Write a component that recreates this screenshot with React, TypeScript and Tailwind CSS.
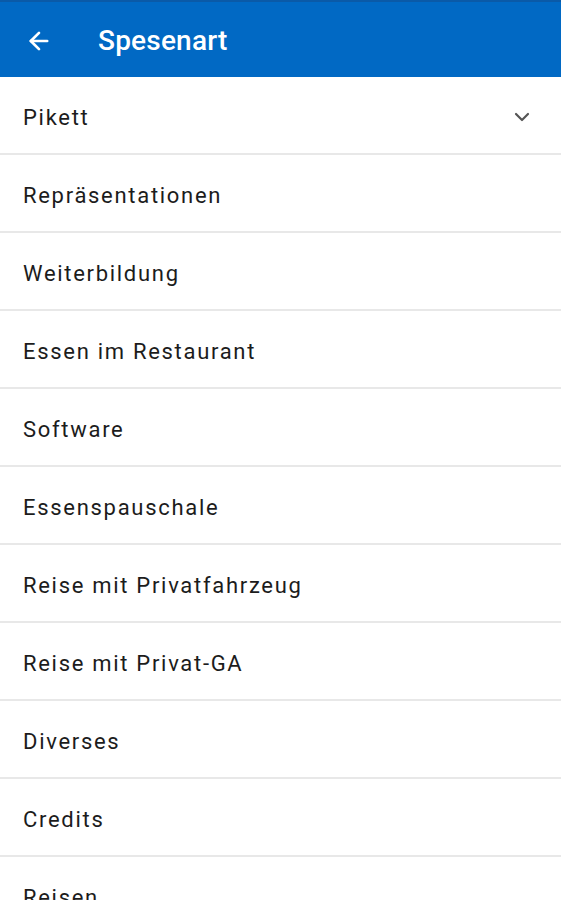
import { ArrowLeft, ChevronDown } from 'lucide-react'

const items = [
  'Pikett',
  'Repräsentationen',
  'Weiterbildung',
  'Essen im Restaurant',
  'Software',
  'Essenspauschale',
  'Reise mit Privatfahrzeug',
  'Reise mit Privat-GA',
  'Diverses',
  'Credits',
  'Reisen',
]

export default function App() {
  return (
    <div className="h-[900px] overflow-hidden bg-white font-['Roboto',sans-serif]">
      <header className="flex h-[77px] items-center bg-[#0169c4] border-t-2 border-[#0a5aa8] pt-[3px] text-white">
        <ArrowLeft className="ml-[25px] h-[28px] w-[28px]" strokeWidth={2.3} />
        <h1 className="ml-[45px] text-[28px] font-medium tracking-[0.2px]">Spesenart</h1>
      </header>
      <ul>
        {items.map((item, i) => (
          <li
            key={item}
            className="flex h-[78px] items-center justify-between border-b-2 border-[#e8e8e8] pl-[23px] pr-[27px] pt-[4px]"
          >
            <span className="text-[22px] tracking-[1.7px] text-[#1c1c1c]">{item}</span>
            {i === 0 && <ChevronDown className="h-[24px] w-[24px] text-[#555]" strokeWidth={2.2} />}
          </li>
        ))}
      </ul>
    </div>
  )
}
